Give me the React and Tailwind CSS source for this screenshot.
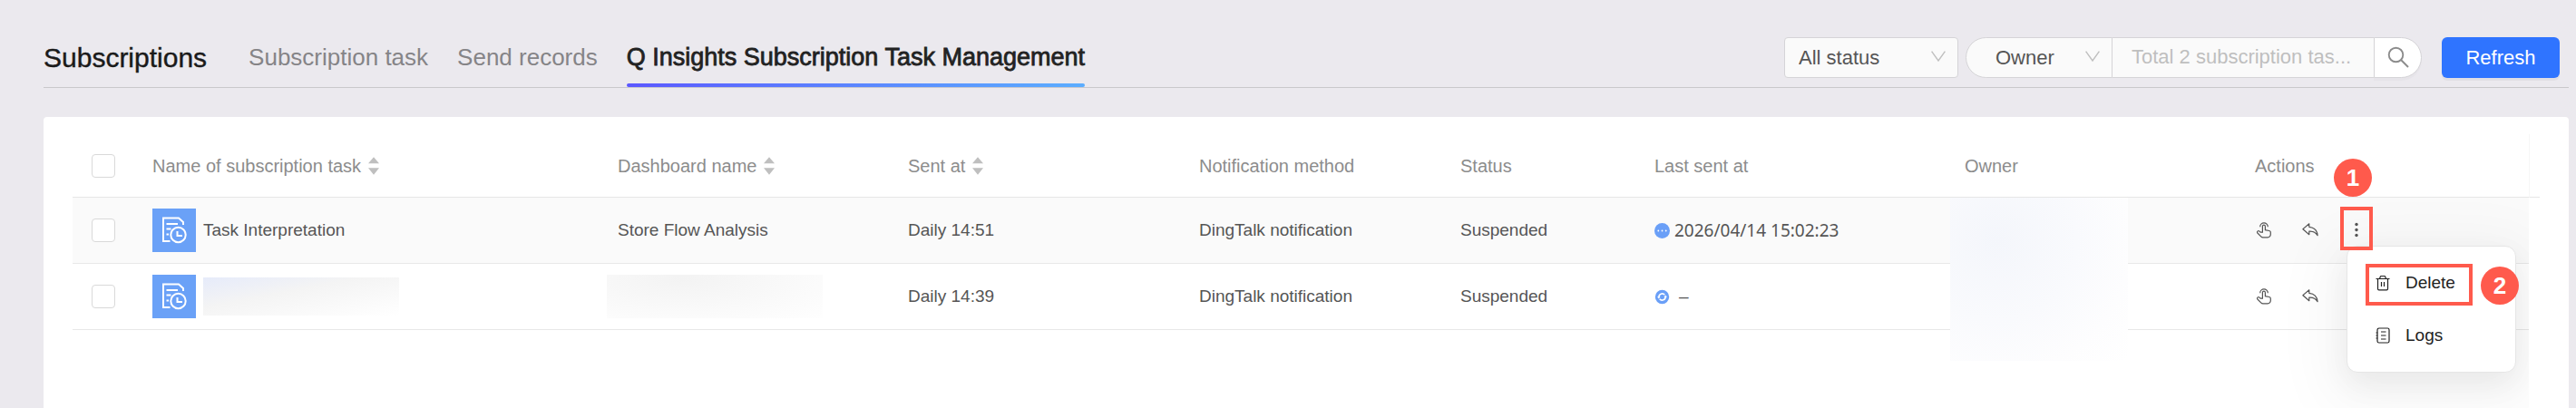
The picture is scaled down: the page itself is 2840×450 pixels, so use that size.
import { useState } from 'react';

const tabs = ['Subscription task', 'Send records', 'Q Insights Subscription Task Management'];

const columns = [
  { label: 'Name of subscription task', sortable: true, width: 'w-[513px]' },
  { label: 'Dashboard name', sortable: true, width: 'w-[320px]' },
  { label: 'Sent at', sortable: true, width: 'w-[321px]' },
  { label: 'Notification method', width: 'w-[288px]' },
  { label: 'Status', width: 'w-[214px]' },
  { label: 'Last sent at', width: 'w-[342px]' },
  { label: 'Owner', width: 'w-[320px]' },
  { label: 'Actions', width: 'w-auto' },
];

const tasks = [
  {
    id: 1,
    name: 'Task Interpretation',
    dashboard: 'Store Flow Analysis',
    sentAt: 'Daily 14:51',
    method: 'DingTalk notification',
    status: 'Suspended',
    lastSent: '2026/04/14 15:02:23',
  },
  {
    id: 2,
    name: '',
    dashboard: '',
    sentAt: 'Daily 14:39',
    method: 'DingTalk notification',
    status: 'Suspended',
    lastSent: '',
  },
];

function Chevron() {
  return (
    <svg className="pointer-events-none absolute top-[15px] right-[14px] h-3 w-4" viewBox="0 0 16 12" fill="none" stroke="#bfbfbf" strokeWidth="1.4">
      <path d="M0.6 0.6 8 11 15.4 0.6" />
    </svg>
  );
}

function SortIcon() {
  return (
    <svg className="h-5 w-3 shrink-0" viewBox="0 0 12 20" fill="#bfbfbf">
      <path d="M6 0.3 12 7.3H0zM6 19.7 12 12.3H0z" />
    </svg>
  );
}

function TaskIcon() {
  return (
    <svg className="size-12 shrink-0 bg-[#6aa1f7]" viewBox="0 0 48 48" fill="none" stroke="#fff" strokeWidth="2">
      <path d="M34 18v-3l-5-4.500H12V36h7.500" />
      <path d="M15.500 17H28M15.500 22.500h5M15.500 28.500h2.500" />
      <circle cx="28.500" cy="29" r="8.200" />
      <path d="M27.500 25v5H33" />
    </svg>
  );
}

function PendingIcon() {
  return (
    <svg className="size-[17px] shrink-0" viewBox="0 0 17 17">
      <circle cx="8.500" cy="8.500" r="8.500" fill="#6a9ff7" />
      <circle cx="4.300" cy="8.500" r="0.900" fill="#fff" />
      <circle cx="8.500" cy="8.500" r="0.900" fill="#fff" />
      <circle cx="12.700" cy="8.500" r="0.900" fill="#fff" />
    </svg>
  );
}

function SyncIcon() {
  return (
    <svg className="size-[17px] shrink-0" viewBox="0 0 17 17" fill="none">
      <circle cx="8.500" cy="8.500" r="7.700" fill="#6a9ff7" />
      <path d="M4.900 8.800A3.600 3.600 0 0 1 11.300 6.300M12.100 8.200A3.600 3.600 0 0 1 5.700 10.700" stroke="#fff" strokeWidth="1.600" />
      <path d="M3 8.200h3.600L4.800 10.600zM14 8.800h-3.600l1.800-2.400z" fill="#fff" />
    </svg>
  );
}

function HandIcon() {
  return (
    <svg className="size-[18px]" viewBox="0 0 18 18" fill="none" stroke="currentColor" strokeWidth="1.200">
      <path d="M4.700 5.200a4.300 4.300 0 0 1 8.600 0" />
      <path d="M7.400 11.200V4.700a1.500 1.500 0 0 1 3 0v4l4.400.8a1.800 1.800 0 0 1 1.500 1.800v2.300a3.200 3.200 0 0 1-3.200 3.200H7.900a3 3 0 0 1-2.200-1L1.900 12a1.400 1.400 0 0 1 .2-2.100c.5-.4 1.200-.4 1.700 0l1.400 1.300z" />
    </svg>
  );
}

function ReplyIcon() {
  return (
    <svg className="size-[18px]" viewBox="0 0 18 18" fill="none" stroke="currentColor" strokeWidth="1.200" strokeLinejoin="round">
      <path d="M7.800 1.800.9 7.700l6.900 6v-3.600c4-.3 7.200 1 9.300 4.600C16.600 9.300 13.200 5.800 7.800 5.300z" />
    </svg>
  );
}

function MoreIcon() {
  return (
    <svg className="size-[18px]" viewBox="0 0 18 18" fill="currentColor">
      <circle cx="9" cy="2.500" r="1.700" />
      <circle cx="9" cy="8.500" r="1.700" />
      <circle cx="9" cy="14.500" r="1.700" />
    </svg>
  );
}

function TrashIcon() {
  return (
    <svg className="size-[18px]" viewBox="0 0 18 18" fill="none" stroke="currentColor" strokeWidth="1.200">
      <path d="M1.500 4.500h15M5.500 4.500l.9-2.600c.1-.3.3-.4.600-.4h4c.3 0 .5.1.6.4l.9 2.600" />
      <path d="M3.500 4.500v11c0 .8.500 1.300 1.300 1.300h8.400c.8 0 1.300-.5 1.300-1.300v-11M7.500 8v5M10.500 8v5" />
    </svg>
  );
}

function LogsIcon() {
  return (
    <svg className="size-[18px]" viewBox="0 0 18 18" fill="none" stroke="currentColor" strokeWidth="1.200">
      <rect x="3" y="1" width="13" height="16" rx="1.800" />
      <path d="M1.500 6h1.800M1.500 9h1.800M1.500 12h1.800M7 5h5.500M7 9h5.500M7 13h5.500" />
    </svg>
  );
}

function StepBadge({ className, children }) {
  return (
    <span className={`absolute flex size-[42px] items-center justify-center rounded-full bg-[#ff5a4c] text-[26px] font-bold text-white ${className}`}>
      {children}
    </span>
  );
}

function Checkbox({ label }) {
  return (
    <input
      type="checkbox"
      aria-label={label}
      className="ml-[21px] block size-[26px] appearance-none rounded border border-[#d9d9d9] bg-white checked:bg-[#2f74ff]"
    />
  );
}

function MoreMenu() {
  return (
    <div className="absolute top-full -left-0.5 z-10 mt-2 w-[187px] rounded-xl border border-[#e6e6e6] bg-white py-[11px] text-[19px] text-[#222] shadow-[0_12px_32px_rgba(0,0,0,0.06),0_16px_64px_24px_rgba(0,0,0,0.04)]">
      <div className="relative">
        <button type="button" className="flex h-[58px] w-full items-center gap-4 pl-[30px]">
          <TrashIcon />
          Delete
        </button>
        <span className="pointer-events-none absolute top-2 left-5 h-[46px] w-[118px] border-4 border-[#ff5a4c]" />
        <StepBadge className="top-[11px] left-[147px]">2</StepBadge>
      </div>
      <button type="button" className="flex h-[58px] w-full items-center gap-4 pl-[30px]">
        <LogsIcon />
        Logs
      </button>
    </div>
  );
}

function TaskRow({ task, menuOpen, onToggleMenu }) {
  const cell = 'h-[73px] border-b border-[#e8e8e8] p-0';

  return (
    <tr className={menuOpen ? 'bg-[#fafafa]' : 'bg-white'}>
      <td className={cell}>
        <Checkbox label={`Select task ${task.id}`} />
      </td>
      <td className={cell}>
        <div className="flex items-center gap-2">
          <TaskIcon />
          {task.name || <span className="h-[42px] w-[216px] bg-linear-to-br from-[#e6ebfa] via-[#f4f4f4] via-40% to-white" />}
        </div>
      </td>
      <td className={cell}>
        {task.dashboard || (
          <div className="-ml-3 h-12 w-[238px] bg-[radial-gradient(ellipse_at_35%_10%,#f3f3f3_0%,#fafafa_60%,#fefefe_100%)]" />
        )}
      </td>
      <td className={cell}>{task.sentAt}</td>
      <td className={cell}>{task.method}</td>
      <td className={cell}>{task.status}</td>
      <td className={cell}>
        {task.lastSent ? (
          <div className="flex items-center gap-[5px] font-['Noto_Sans',sans-serif]">
            <PendingIcon />
            {task.lastSent}
          </div>
        ) : (
          <div className="flex items-center gap-[10px]">
            <SyncIcon />–
          </div>
        )}
      </td>
      <td className={`${cell} relative`}>
        {menuOpen && (
          <div className="absolute top-0 -left-4 z-1 h-[180px] w-[196px] bg-[radial-gradient(circle_at_52px_48px,#f4f6fb_0%,#f9fafd_45%,#fdfdfe_75%,#ffffff_100%)]" />
        )}
      </td>
      <td className={cell}>
        <div className="flex items-center gap-[33px] pl-px">
          <button type="button" aria-label="Run task">
            <HandIcon />
          </button>
          <button type="button" aria-label="Transfer task">
            <ReplyIcon />
          </button>
          <div className="relative size-[18px]">
            <button type="button" aria-label="More actions" onClick={onToggleMenu} className="block">
              <MoreIcon />
            </button>
            {menuOpen && (
              <>
                <MoreMenu />
                <span className="pointer-events-none absolute -top-[17px] -left-[9px] z-20 h-12 w-9 border-4 border-[#ff5a4c]" />
                <StepBadge className="-top-[70px] -left-4 z-20">1</StepBadge>
              </>
            )}
          </div>
        </div>
      </td>
    </tr>
  );
}

export default function App() {
  const [activeTab, setActiveTab] = useState(tabs[2]);
  const [openMenu, setOpenMenu] = useState(1);

  return (
    <div className="flex min-h-screen flex-col bg-[#ebe9ee] pr-2 pl-12 font-['Liberation_Sans',Arial,sans-serif] text-[#555]">
      <header className="flex h-[97px] items-stretch border-b border-[#c9c8cb] pt-[30px]">
        <h1 className="mr-[46px] flex items-center text-[30px] whitespace-nowrap text-[#1a1a1a] [-webkit-text-stroke:0.4px]">
          Subscriptions
        </h1>
        <nav className="flex gap-8 text-[26px] whitespace-nowrap">
          {tabs.map((tab) => (
            <button
              key={tab}
              type="button"
              onClick={() => setActiveTab(tab)}
              className={tab === activeTab ? 'relative text-[27px] text-[#222] [-webkit-text-stroke:0.8px]' : 'text-[#858487]'}
            >
              {tab}
              {tab === activeTab && (
                <span className="absolute bottom-0 left-0 h-1 w-full rounded-xs bg-linear-to-r from-[#5b57ff] to-[#5badff]" />
              )}
            </button>
          ))}
        </nav>

        <div className="ml-auto flex items-center pr-[10px] text-[22px]">
          <div className="relative mr-2">
            <select aria-label="Status filter" className="block h-[45px] w-[192px] appearance-none rounded border border-[#d5d4d7] bg-[#fafafa] pl-[15px]">
              <option>All status</option>
            </select>
            <Chevron />
          </div>
          <div className="relative">
            <select aria-label="Search field" className="block h-[45px] w-[162px] appearance-none rounded-l-full border border-[#d5d4d7] bg-[#fafafa] pl-8">
              <option>Owner</option>
            </select>
            <Chevron />
          </div>
          <input
            type="text"
            aria-label="Search subscription tasks"
            placeholder="Total 2 subscription tas..."
            className="h-[45px] w-[288px] border-y border-[#d5d4d7] bg-[#fafafa] pl-[21px] placeholder:text-[#bfbfbf]"
          />
          <button type="button" aria-label="Search" className="flex h-[45px] w-[53px] items-center rounded-r-full border border-[#d5d4d7] bg-white pl-[14px] shadow-[0_3px_0_rgba(0,0,0,0.02)]">
            <svg className="size-6" viewBox="0 0 24 24" fill="none" stroke="#8c8c8c" strokeWidth="1.900">
              <circle cx="9.500" cy="9.500" r="7.800" />
              <path d="M15 15l8 8" />
            </svg>
          </button>
          <button type="button" className="ml-[22px] h-[45px] w-[130px] rounded-md bg-[#2f74ff] text-white shadow-[0_3px_0_rgba(0,0,0,0.04)]">
            Refresh
          </button>
        </div>
      </header>

      <main className="mt-8 flex flex-1 rounded-t bg-white pt-[19px] pr-8 pl-8">
        <div className="min-w-0 flex-1 overflow-hidden">
          <table className="w-full border-separate border-spacing-0 text-left text-[19px] whitespace-nowrap">
            <thead>
              <tr>
                <th className="h-[70px] w-[88px] border-b border-[#e6e6e6] p-0">
                  <Checkbox label="Select all tasks" />
                </th>
                {columns.map((column) => (
                  <th key={column.label} className={`h-[70px] border-b border-[#e6e6e6] p-0 text-[20px] font-normal text-[#8c8c8c] ${column.width}`}>
                    <div className="flex items-center gap-2">
                      {column.label}
                      {column.sortable && <SortIcon />}
                    </div>
                  </th>
                ))}
              </tr>
            </thead>
            <tbody>
              {tasks.map((task) => (
                <TaskRow
                  key={task.id}
                  task={task}
                  menuOpen={openMenu === task.id}
                  onToggleMenu={() => setOpenMenu(openMenu === task.id ? null : task.id)}
                />
              ))}
            </tbody>
          </table>
        </div>
        {/* scrollbar gutter next to the header row */}
        <div className="h-[70px] w-3 border-b border-l border-b-[#e6e6e6] border-l-[#f7f7f7]" />
      </main>
    </div>
  );
}
